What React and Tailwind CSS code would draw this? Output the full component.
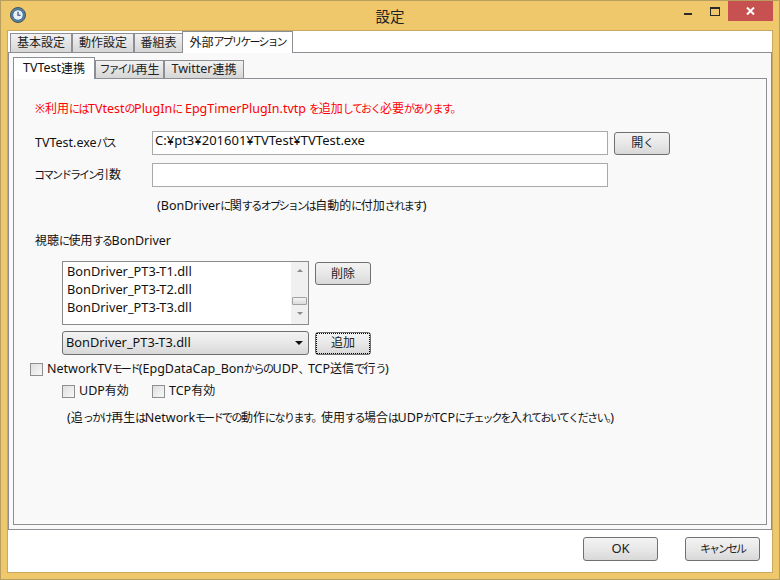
import React from 'react'

const FONT = "font-['Noto_Sans','Noto_Sans_CJK_JP',sans-serif]"

// the reference font mixes larger latin with small kanji and narrow kana
const J = ({ children }) =>
  children.split(/([\u3040-\u309f、。]+|[\u30a0-\u30ff]+|[\u4e00-\u9fff※]+)/).map((part, i) => {
    if (/^[\u3040-\u309f、。]+$/.test(part))
      return <span key={i} className="text-[11px] tracking-[-1.5px]">{part}</span>
    if (/^[\u30a0-\u30ff]+$/.test(part))
      return <span key={i} className="text-[11px] tracking-[-2px]">{part}</span>
    if (/^[\u4e00-\u9fff※]+$/.test(part))
      return <span key={i} className="text-[12px]">{part}</span>
    return part
  })

const Tab = ({ label, active, className }) => (
  <div
    className={`-mb-px flex items-center justify-center whitespace-nowrap border border-[#8c8e94] text-[12.5px] ${
      active
        ? 'relative z-10 border-b-0 bg-white text-[#111]'
        : 'bg-gradient-to-b from-[#f2f2f2] to-[#d6d6d6] text-[#222]'
    } ${className}`}
  >
    <J>{label}</J>
  </div>
)

const WinButton = ({ label, className, focused }) => (
  <div
    className={`flex items-center justify-center rounded-[3px] border border-[#707070] bg-gradient-to-b from-[#f3f3f3] via-[#e8e8e8] via-50% to-[#d8d8d8] text-[#222] ${className}`}
  >
    {focused ? (
      <div className="flex h-full w-full items-center justify-center border border-dotted border-black">
        <J>{label}</J>
      </div>
    ) : (
      <J>{label}</J>
    )}
  </div>
)

const Check = ({ label, className }) => (
  <div className={`flex h-[16px] items-center gap-1 whitespace-nowrap ${className}`}>
    <div className="h-[13px] w-[13px] shrink-0 border border-[#8f8f8f] bg-gradient-to-br from-[#dfdfdf] to-[#f8f8f8]" />
    <span><J>{label}</J></span>
  </div>
)

const ListScrollbar = () => (
  <div className="flex w-[17px] flex-col items-center bg-[#f0f0f0]">
    <div className="mt-[7px] h-0 w-0 border-x-[3px] border-b-[3px] border-x-transparent border-b-[#8a8a8a]" />
    <div className="mt-[25px] h-[8px] w-[15px] rounded-[1px] border border-[#a0a0a0] bg-gradient-to-b from-[#f4f4f4] to-[#dcdcdc]" />
    <div className="mt-[7px] h-0 w-0 border-x-[3px] border-t-[3px] border-x-transparent border-t-[#8a8a8a]" />
  </div>
)

const TitleBar = () => (
  <div className="flex h-[29px] shrink-0 items-start">
    {/* clock icon */}
    <svg className="ml-[3px] mt-[6px]" width="16" height="16" viewBox="0 0 17 17">
      <circle cx="8.5" cy="8.5" r="8" fill="#5f7f93" stroke="#3d5361" />
      <circle cx="8.5" cy="8.5" r="5.6" fill="#eaf1f6" stroke="#2f6f9f" />
      <path d="M8.5 5v3.8h2.8" fill="none" stroke="#24455f" strokeWidth="1.2" />
    </svg>
    <div className="flex-1 pl-[70px] pt-[5px] text-center text-[14.5px] leading-[20px] text-[#222]">設定</div>
    {/* window controls */}
    <div className="mr-[18px] mt-[12px] h-[2px] w-[8px] bg-[#2a2a2a]" />
    <div className="mr-[8px] mt-[6px] h-[9px] w-[10px] border border-t-2 border-[#2a2a2a]" />
    <div className="flex h-[20px] w-[45px] items-center justify-center bg-[#c75050]">
      <svg width="9" height="8" viewBox="0 0 9 8">
        <path d="M1 0.5l7 7M8 0.5l-7 7" stroke="#fff" strokeWidth="2" />
      </svg>
    </div>
  </div>
)

const TvTestPanel = () => (
  <div className="flex flex-1 flex-col border border-[#8c8e94] bg-[#f9f9f9] pl-[17px] text-[12.5px] leading-[16px] text-[#111]">
    <div className="ml-[4px] mt-[22px] h-[16px] text-[#ff0000]">
      <J>※利用にはTVtestのPlugInに EpgTimerPlugIn.tvtp を追加しておく必要があります。</J>
    </div>

    <div className="mt-[14px] flex h-[24px] items-center">
      <div className="w-[121px] pl-[4px]"><J>TVTest.exeパス</J></div>
      <div className="h-[24px] w-[456px] border border-[#a9a9a9] bg-white pl-[2px] text-[13px] leading-[16px]">C:¥pt3¥201601¥TVTest¥TVTest.exe</div>
      <WinButton label="開く" className="ml-[6px] h-[23px] w-[56px]" />
    </div>
    <div className="mt-[8px] flex h-[24px] items-center">
      <div className="w-[121px] pl-[3px]"><J>コマンドライン引数</J></div>
      <div className="h-[24px] w-[456px] border border-[#a9a9a9] bg-white" />
    </div>
    <div className="ml-[126px] mt-[11px] h-[16px]"><J>(BonDriverに関するオプションは自動的に付加されます)</J></div>

    <div className="ml-[4px] mt-[19px] h-[16px]"><J>視聴に使用するBonDriver</J></div>

    <div className="ml-[31px] mt-[12px] flex items-start gap-[6px]">
      <div className="flex h-[64px] w-[247px] border border-[#8a8a8a] bg-white">
        <div className="flex-1 pl-[4px] text-[12.8px] leading-[18px]">
          <div>BonDriver_PT3-T1.dll</div>
          <div>BonDriver_PT3-T2.dll</div>
          <div>BonDriver_PT3-T3.dll</div>
        </div>
        <ListScrollbar />
      </div>
      <WinButton label="削除" className="mt-px h-[23px] w-[56px]" />
    </div>

    <div className="ml-[31px] mt-[6px] flex items-center gap-[6px]">
      <div className="flex h-[24px] w-[247px] items-center justify-between rounded-[3px] border border-[#707070] bg-gradient-to-b from-[#f3f3f3] via-[#e8e8e8] via-50% to-[#d8d8d8] pl-[3px] pr-[5px] text-[12.8px]">
        <span className="-mt-[2px]">BonDriver_PT3-T3.dll</span>
        <div className="h-0 w-0 border-x-[4px] border-t-[4px] border-x-transparent border-t-[#111]" />
      </div>
      <WinButton label="追加" focused className="h-[23px] w-[56px]" />
    </div>

    <Check label="NetworkTVモード(EpgDataCap_BonからのUDP、TCP送信で行う)" className="-ml-px mt-[6px]" />
    <div className="ml-[31px] mt-[6px] flex h-[16px]">
      <Check label="UDP有効" className="w-[90px]" />
      <Check label="TCP有効" />
    </div>
    <div className="ml-[36px] mt-[11px] h-[16px]">
      <J>(追っかけ再生はNetworkモードでの動作になります。使用する場合はUDPかTCPにチェックを入れておいてください。)</J>
    </div>
  </div>
)

const App = () => (
  <div className={`${FONT} flex h-[580px] w-[780px] flex-col overflow-hidden border border-[#b89f5f] bg-[#f0c86c] px-[6px] pb-[6px]`}>
    <TitleBar />
    <div className="flex flex-1 flex-col border border-[#c9a95f] bg-white text-[13px]">
      {/* outer tabs */}
      <div className="flex h-[21px] items-end pl-[2px]">
        <Tab label="基本設定" className="h-[20px] w-[62px]" />
        <Tab label="動作設定" className="h-[20px] w-[62px]" />
        <Tab label="番組表" className="h-[20px] w-[49px]" />
        <Tab label="外部アプリケーション" active className="-ml-px h-[22px] w-[111px]" />
      </div>
      <div className="flex h-[478px] shrink-0 flex-col border border-[#8c8e94] bg-[#f9f9f9] px-[4px] pb-[4px] pt-[4px]">
        {/* inner tabs */}
        <div className="flex h-[21px] items-end">
          <Tab label="TVTest連携" active className="h-[22px] w-[82px]" />
          <Tab label="ファイル再生" className="h-[19px] w-[69px]" />
          <Tab label="Twitter連携" className="h-[19px] w-[80px]" />
        </div>
        <TvTestPanel />
      </div>
      {/* dialog buttons */}
      <div className="flex flex-1 items-start justify-end gap-[27px] pr-[12px] pt-[7px]">
        <WinButton label="OK" className="h-[24px] w-[75px]" />
        <WinButton label="キャンセル" className="h-[24px] w-[75px]" />
      </div>
    </div>
  </div>
)

export default App
